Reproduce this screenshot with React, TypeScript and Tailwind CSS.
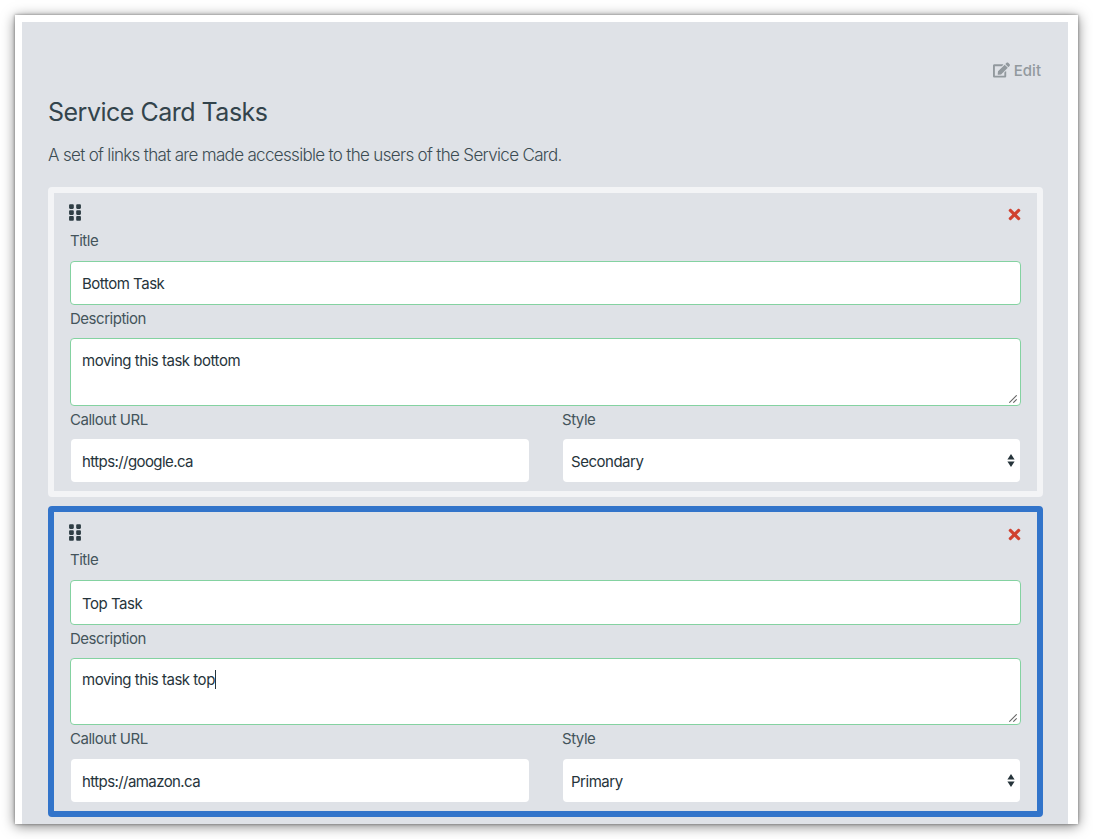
import { FaEdit, FaGripVertical, FaTimes } from "react-icons/fa";

type Task = {
  title: string;
  description: string;
  url: string;
  style: string;
  active: boolean;
};

const tasks: Task[] = [
  { title: "Bottom Task", description: "moving this task bottom", url: "https://google.ca", style: "Secondary", active: false },
  { title: "Top Task", description: "moving this task top", url: "https://amazon.ca", style: "Primary", active: true },
];

function Label({ children }: { children: string }) {
  return <div className="h-[20px] text-[15px] leading-[20px] tracking-[-0.48px] text-[#44545b]">{children}</div>;
}

function ResizeHandle() {
  return (
    <svg className="absolute right-[3px] bottom-[2px] h-[8px] w-[8px]" viewBox="0 0 8 8" fill="none" stroke="#666" strokeWidth="1.1">
      <path d="M0.3 7.7 7.7 0.3M4.3 7.7 7.7 4.3" />
    </svg>
  );
}

function SelectArrows() {
  return (
    <svg className="h-[13px] w-[8px]" viewBox="0 0 8 13" fill="#26343b">
      <path d="M4 0 7.6 5.5H0.4ZM4 13 0.4 7.5h7.2Z" />
    </svg>
  );
}

function TaskCard({ task }: { task: Task }) {
  const a = task.active;
  return (
    <section
      className={`rounded-[4px] border-[6px] pr-[16px] pl-[16px] ${a ? "h-[311px] border-[#3274ca]" : "h-[310px] border-[#f3f4f6]"}`}
    >
      <div className={`flex h-[38px] items-start justify-between ${a ? "pt-[11px]" : "pt-[10px]"}`}>
        <FaGripVertical className="-ml-px h-[19px] w-[12px] text-[#2f3e45]" />
        <FaTimes className="mt-[3px] -mr-px h-[17px] w-[15px] text-[#d0412f]" />
      </div>
      <Label>Title</Label>
      <div
        className={`mt-[10px] flex items-center rounded-[4px] border border-[#84d2a1] bg-white px-[11px] text-[15px] leading-[20px] tracking-[-0.48px] text-[#26343b] ${a ? "h-[45px] pt-[3px]" : "h-[44px] pt-[2px]"}`}
      >
        {task.title}
      </div>
      <div className="mt-[4px]">
        <Label>Description</Label>
      </div>
      <div
        className={`relative mt-[9px] rounded-[4px] border border-[#84d2a1] bg-white px-[11px] text-[15px] leading-[20px] tracking-[-0.48px] text-[#26343b] ${a ? "h-[67px] pt-[11px]" : "h-[68px] pt-[12px]"}`}
      >
        <span className={a ? "border-r border-[#26343b]" : ""}>{task.description}</span>
        <ResizeHandle />
      </div>
      <div className="mt-[4px] grid grid-cols-[459px_459px] justify-between">
        <div>
          <Label>Callout URL</Label>
          <div
            className={`mr-[0.5px] ml-[0.5px] flex h-[43px] items-center rounded-[4px] bg-white px-[11.5px] pt-[3px] text-[15px] leading-[20px] tracking-[-0.58px] text-[#26343b] ${a ? "mt-[10px]" : "mt-[9px]"}`}
          >
            {task.url}
          </div>
        </div>
        <div>
          <Label>Style</Label>
          <div
            className={`mr-px ml-px flex h-[43px] items-center justify-between rounded-[4px] bg-white pr-[5px] pl-[8px] text-[15px] leading-[20px] tracking-[-0.48px] text-[#26343b] ${a ? "mt-[10px]" : "mt-[9px]"}`}
          >
            <span className="pt-[2px]">{task.style}</span>
            <SelectArrows />
          </div>
        </div>
      </div>
    </section>
  );
}

export default function App() {
  return (
    <div className="h-[839px] w-[1093px] overflow-hidden bg-white pt-[15px] pl-[15px] font-['Inter','Liberation_Sans',sans-serif]">
      <main className="h-[809px] w-[1063px] bg-white pt-[7px] pr-[10px] pl-[7px] shadow-[0_2px_12px_rgba(0,0,0,0.5),0_0_3px_rgba(0,0,0,0.4)]">
        <div className="h-[802px] bg-[#dfe2e7] pr-[25px] pl-[26px]">
          <div className="flex h-[74px] items-start justify-end gap-[4px] pt-[39px] pr-[2px] text-[15px] leading-[20px] font-medium text-[#92999e]">
            <FaEdit className="mt-px h-[16px] w-[17px]" />
            <span>Edit</span>
          </div>
          <h1 className="h-[32px] text-[25px] leading-[32px] tracking-[-0.5px] text-[#33444c]">Service Card Tasks</h1>
          <p className="mt-[16px] h-[43px] text-[17px] leading-[22px] font-light tracking-[-0.675px] text-[#3c4c53]">
            A set of links that are made accessible to the users of the Service Card.
          </p>
          <div className="flex flex-col gap-[9px]">
            {tasks.map((t) => (
              <TaskCard key={t.title} task={t} />
            ))}
          </div>
        </div>
      </main>
    </div>
  );
}
